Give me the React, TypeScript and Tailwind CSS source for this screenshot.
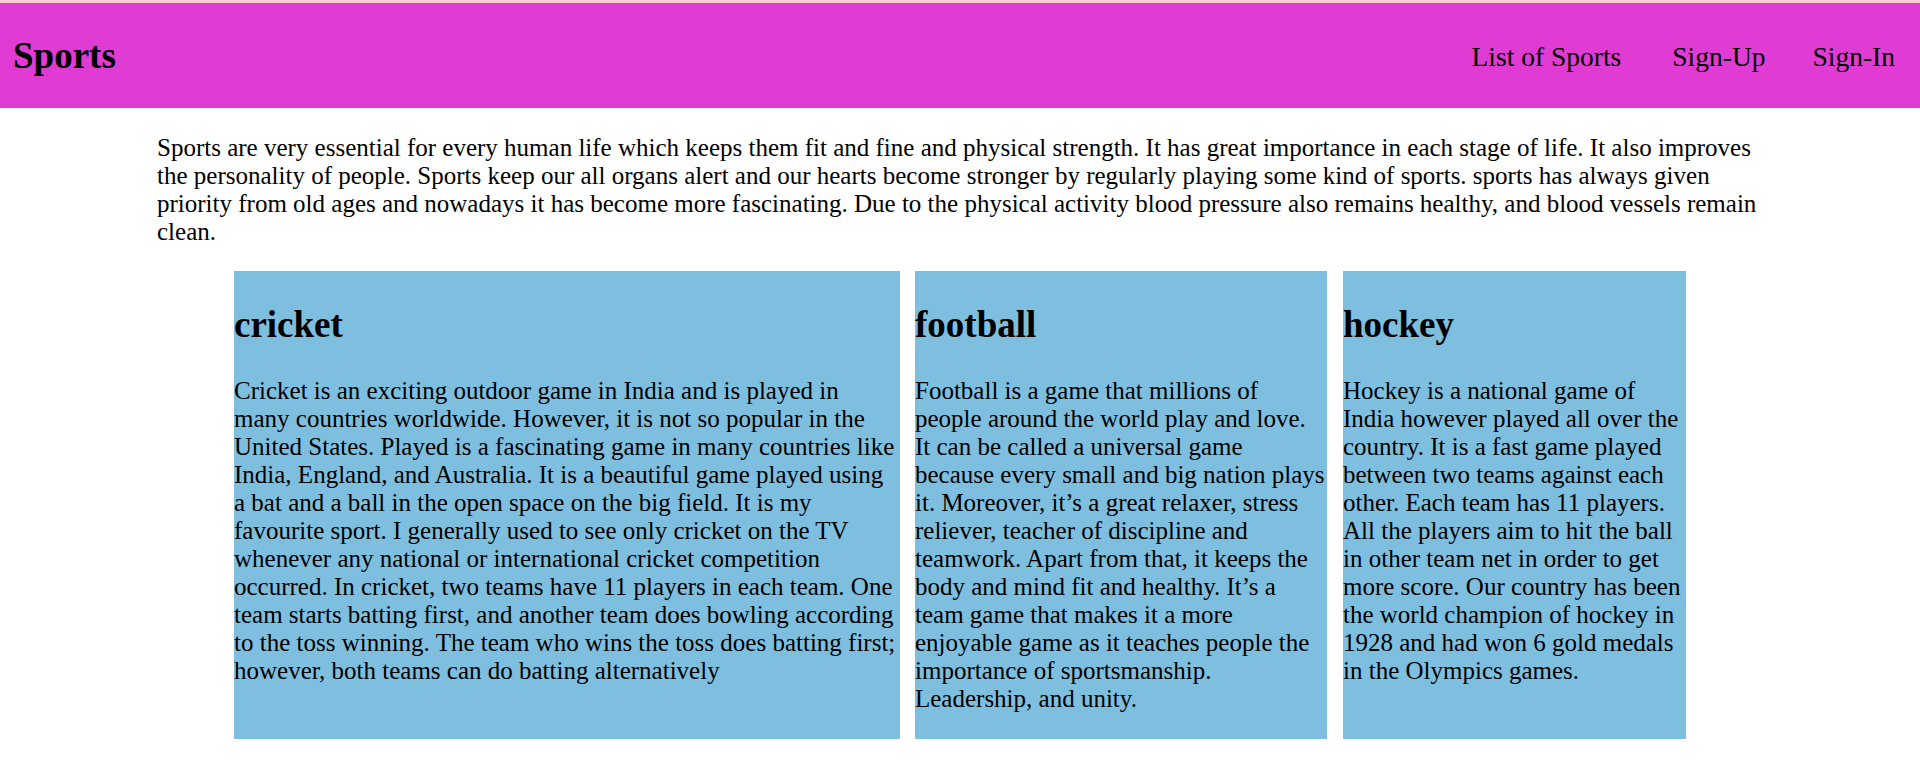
import React from "react";

const serif = { fontFamily: '"Liberation Serif", "Times New Roman", serif' };

const cards = [
  {
    title: "cricket",
    w: "w-[666px]",
    text: "Cricket is an exciting outdoor game in India and is played in many countries worldwide. However, it is not so popular in the United States. Played is a fascinating game in many countries like India, England, and Australia. It is a beautiful game played using a bat and a ball in the open space on the big field. It is my favourite sport. I generally used to see only cricket on the TV whenever any national or international cricket competition occurred. In cricket, two teams have 11 players in each team. One team starts batting first, and another team does bowling according to the toss winning. The team who wins the toss does batting first; however, both teams can do batting alternatively",
  },
  {
    title: "football",
    w: "w-[412px]",
    text: "Football is a game that millions of people around the world play and love. It can be called a universal game because every small and big nation plays it. Moreover, it\u2019s a great relaxer, stress reliever, teacher of discipline and teamwork. Apart from that, it keeps the body and mind fit and healthy. It\u2019s a team game that makes it a more enjoyable game as it teaches people the importance of sportsmanship. Leadership, and unity.",
  },
  {
    title: "hockey",
    w: "w-[343px]",
    text: "Hockey is a national game of India however played all over the country. It is a fast game played between two teams against each other. Each team has 11 players. All the players aim to hit the ball in other team net in order to get more score. Our country has been the world champion of hockey in 1928 and had won 6 gold medals in the Olympics games.",
  },
];

export default function App() {
  return (
    <div className="min-h-[769px] bg-white text-black" style={serif}>
      <div className="h-[3px] bg-[#f8cdd0]" />
      <header className="flex h-[105px] items-center justify-between bg-[#e03cd3] pl-[13px] pr-[25px]">
        <h1 className="text-[37px] font-bold leading-[42px]">Sports</h1>
        <nav className="flex items-center pt-[2px] text-[27.5px] leading-[32px]">
          <a>List of Sports</a>
          <a className="ml-[51px]">Sign-Up</a>
          <a className="ml-[47px]">Sign-In</a>
        </nav>
      </header>
      <p className="mx-[157px] mt-[26px] text-[25px] leading-[28px]">
        Sports are very essential for every human life which keeps them fit and fine and physical strength. It has great importance in each stage of life. It also improves the personality of people. Sports keep our all organs alert and our hearts become stronger by regularly playing some kind of sports. sports has always given priority from old ages and nowadays it has become more fascinating. Due to the physical activity blood pressure also remains healthy, and blood vessels remain clean.
      </p>
      <div className="mt-[25px] flex justify-center gap-[15px]">
        {cards.map((c, i) => (
          <div key={c.title} className={`${c.w} bg-[#7ebedf] ${i === 2 ? "ml-[1px]" : ""}`}>
            <h2 className="mt-[33px] mb-[31px] text-[37px] font-bold leading-[42px]">{c.title}</h2>
            <p className="mb-[26px] text-[25px] leading-[28px]">{c.text}</p>
          </div>
        ))}
      </div>
    </div>
  );
}
